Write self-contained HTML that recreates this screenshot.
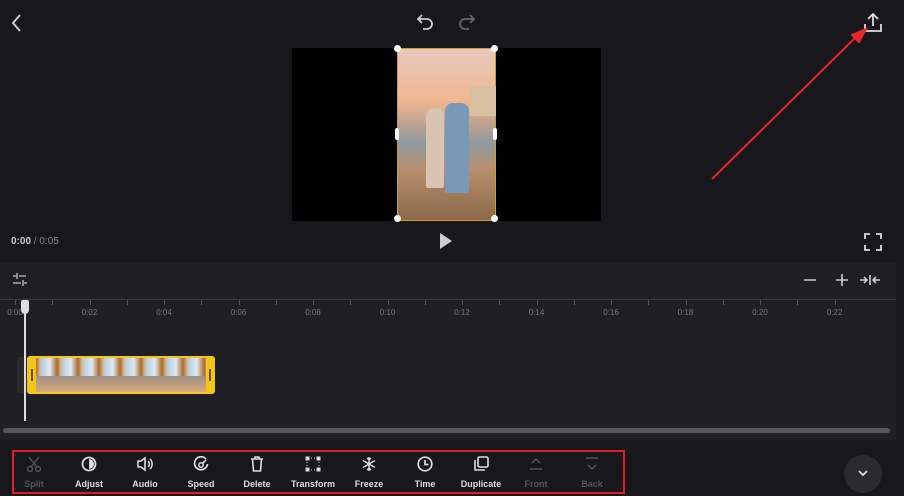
<!DOCTYPE html>
<html><head><style>
*{margin:0;padding:0;box-sizing:border-box}
body{width:904px;height:496px;background:#17171c;position:relative;overflow:hidden;font-family:"Liberation Sans",sans-serif;color:#ddd}
.abs{position:absolute}
.panel{left:0;top:262px;width:896px;height:178px;background:#202024}
.tick{position:absolute;top:300px;width:1px;height:5px;background:#555}
.lbl{position:absolute;top:308px;font-size:8px;color:#777;width:30px;text-align:center}
.tool{position:absolute;top:456px;width:56px;text-align:center;font-size:9px;font-weight:bold;color:#ddd}
.tool svg{display:block;margin:0 auto 7px}
.dis{color:#555}
</style></head><body>
<svg class="abs" style="left:8px;top:12px" width="16" height="22"><path d="M12 3 L5 11 L12 19" stroke="#ccc" stroke-width="2" fill="none"/></svg>
<svg class="abs" style="left:414px;top:12px" width="22" height="20"><path d="M8 3 L4 7 L8 11 M4 7 H13 a5 5 0 0 1 0 10 H9" stroke="#ccc" stroke-width="1.8" fill="none"/></svg>
<svg class="abs" style="left:456px;top:12px" width="22" height="20"><path d="M14 3 L18 7 L14 11 M18 7 H9 a5 5 0 0 0 0 10 H13" stroke="#666" stroke-width="1.8" fill="none"/></svg>
<svg class="abs" style="left:862px;top:12px" width="22" height="22"><path d="M11 2 V14 M6 7 L11 2 L16 7 M3 12 V19 H19 V12" stroke="#ddd" stroke-width="1.8" fill="none"/></svg>
<div class="abs" style="left:292px;top:48px;width:309px;height:173px;background:#000"></div>
<div class="abs" style="left:397px;top:48px;width:99px;height:173px;border:1px solid #c9a030;background:linear-gradient(180deg,#e8c8c0 0%,#f0b890 30%,#b8a090 45%,#8f9aa0 55%,#b89070 70%,#8a6848 100%)"></div>
<div class="abs" style="left:426px;top:108px;width:18px;height:80px;background:#d8c4b0;border-radius:8px 8px 2px 2px"></div>
<div class="abs" style="left:445px;top:103px;width:24px;height:90px;background:#7a98b8;border-radius:8px 8px 2px 2px"></div>
<div class="abs" style="left:470px;top:86px;width:26px;height:30px;background:#d8c0a0"></div>
<div class="abs" style="left:394px;top:45px;width:7px;height:7px;border-radius:50%;background:#fff"></div>
<div class="abs" style="left:491px;top:45px;width:7px;height:7px;border-radius:50%;background:#fff"></div>
<div class="abs" style="left:394px;top:215px;width:7px;height:7px;border-radius:50%;background:#fff"></div>
<div class="abs" style="left:491px;top:215px;width:7px;height:7px;border-radius:50%;background:#fff"></div>
<div class="abs" style="left:395px;top:128px;width:4px;height:12px;border-radius:2px;background:#fff"></div>
<div class="abs" style="left:493px;top:128px;width:4px;height:12px;border-radius:2px;background:#fff"></div>
<div class="abs" style="left:11px;top:236px;font-size:10px;font-weight:bold;color:#ccc">0:00 <span style="color:#888;font-weight:normal">/ 0:05</span></div>
<svg class="abs" style="left:438px;top:232px" width="16" height="18"><path d="M2 1 L14 9 L2 17Z" fill="#ccc"/></svg>
<svg class="abs" style="left:864px;top:233px" width="18" height="18"><path d="M1 6 V1 H6 M12 1 H17 V6 M17 12 V17 H12 M6 17 H1 V12" stroke="#ddd" stroke-width="1.8" fill="none"/></svg>
<div class="abs panel"></div>
<svg class="abs" style="left:12px;top:273px" width="16" height="14"><path d="M1 3H4 M7 3H14 M5 0V6 M1 10H9 M12 10H15 M11 7V13" stroke="#aaa" stroke-width="1.6"/></svg>
<svg class="abs" style="left:802px;top:272px" width="80" height="16"><path d="M2 8H14 M34 8H46 M40 2V14 M58 8H64 M62 5L65 8L62 11 M78 8H72 M74 5L71 8L74 11 M68 3V13" stroke="#ccc" stroke-width="1.6" fill="none"/></svg>
<div class="abs" style="left:0;top:299px;width:896px;height:1px;background:#3a3a3e"></div>
<div id="ticks"></div>
<script>
var h='';for(var i=0;i<=22;i++){var x=15+i*37.25;h+='<div class="tick" style="left:'+x+'px"></div>';if(i%2==0)h+='<div class="lbl" style="left:'+(x-15)+'px">0:'+(i<10?'0':'')+i+'</div>';}
document.getElementById('ticks').innerHTML=h;
</script>
<div class="abs" style="left:17px;top:357px;width:12px;height:36px;background:#2a2a2e;border-radius:3px"></div>
<div class="abs" style="left:27px;top:356px;width:188px;height:38px;background:#f5c518;border-radius:3px"></div>
<div class="abs" style="left:36px;top:358px;width:170px;height:34px;background:repeating-linear-gradient(90deg,#a86c30 0,#d8b890 4px,#b8d0e0 6px,#e0e8f0 14px,#a86c30 21px);"></div>
<div class="abs" style="left:36px;top:376px;width:170px;height:16px;background:linear-gradient(180deg,#a09088,#d8a878)"></div>
<div class="abs" style="left:31px;top:369px;width:2px;height:12px;background:#6a5000"></div>
<div class="abs" style="left:209px;top:369px;width:2px;height:12px;background:#6a5000"></div>
<div class="abs" style="left:24px;top:303px;width:2px;height:118px;background:#ddd"></div>
<div class="abs" style="left:21px;top:300px;width:8px;height:14px;background:#ddd;border-radius:2px 2px 4px 4px"></div>
<div class="abs" style="left:3px;top:428px;width:887px;height:5px;background:#58585c;border-radius:3px"></div>
<svg class="abs" style="left:0;top:0" width="904" height="496"><path d="M712 179 L858 35" stroke="#e8262a" stroke-width="2"/><path d="M866 29 L852 35 L859 42Z" fill="#e8262a" stroke="#e8262a" stroke-width="2"/>
<rect x="13" y="451" width="611" height="42" fill="none" stroke="#e01c24" stroke-width="2"/></svg>
<div class="tool dis" style="left:6px"><svg width="16" height="16"><circle cx="4" cy="13" r="2.5" stroke="#555" fill="none" stroke-width="1.4"/><circle cx="12" cy="13" r="2.5" stroke="#555" fill="none" stroke-width="1.4"/><path d="M3 1L11 11 M13 1L5 11" stroke="#555" stroke-width="1.4"/></svg>Split</div>
<div class="tool" style="left:61px"><svg width="16" height="16"><circle cx="8" cy="8" r="6.5" stroke="#ddd" stroke-width="1.8" fill="none"/><path d="M8 3 a5 5 0 0 1 0 10Z" fill="#ddd"/></svg>Adjust</div>
<div class="tool" style="left:117px"><svg width="18" height="16"><path d="M2 5H5L9 2V14L5 11H2Z" stroke="#ddd" stroke-width="1.6" fill="none"/><path d="M12 5a4 4 0 0 1 0 6 M14 3a7 7 0 0 1 0 10" stroke="#ddd" stroke-width="1.5" fill="none"/></svg>Audio</div>
<div class="tool" style="left:173px"><svg width="16" height="16"><path d="M13 3 A6.5 6.5 0 1 0 14.5 8" stroke="#ddd" stroke-width="1.7" fill="none"/><circle cx="8" cy="9" r="2.2" stroke="#ddd" stroke-width="1.5" fill="none"/><path d="M9.5 7.5L13 4" stroke="#ddd" stroke-width="1.6"/></svg>Speed</div>
<div class="tool" style="left:229px"><svg width="16" height="16"><path d="M2 3H14 M6 3V1H10V3 M3.5 3L4.5 15H11.5L12.5 3" stroke="#ddd" stroke-width="1.6" fill="none"/></svg>Delete</div>
<div class="tool" style="left:285px"><svg width="16" height="16"><path d="M1 1h3v3h-3z M12 1h3v3h-3z M1 12h3v3h-3z M12 12h3v3h-3z M6 2h1 M9 2h1 M6 14h1 M9 14h1 M2 6v1 M2 9v1 M14 6v1 M14 9v1" fill="#ddd" stroke="#ddd" stroke-width="1"/></svg>Transform</div>
<div class="tool" style="left:341px"><svg width="16" height="16"><path d="M8 1V15 M2 4.5L14 11.5 M2 11.5L14 4.5 M6 2L8 4L10 2 M6 14L8 12L10 14" stroke="#ddd" stroke-width="1.4" fill="none"/></svg>Freeze</div>
<div class="tool" style="left:397px"><svg width="16" height="16"><circle cx="8" cy="8" r="6.8" stroke="#ddd" stroke-width="1.7" fill="none"/><path d="M8 4V8.5H11.5" stroke="#ddd" stroke-width="1.7" fill="none"/></svg>Time</div>
<div class="tool" style="left:453px"><svg width="16" height="16"><rect x="5" y="1" width="10" height="10" rx="1.5" stroke="#ddd" stroke-width="1.6" fill="none"/><path d="M2 4V14H12" stroke="#ddd" stroke-width="1.6" fill="none"/></svg>Duplicate</div>
<div class="tool dis" style="left:508px"><svg width="16" height="16"><path d="M4 7L8 3L12 7 M2 13H14" stroke="#555" stroke-width="1.5" fill="none"/></svg>Front</div>
<div class="tool dis" style="left:564px"><svg width="16" height="16"><path d="M2 2H14 M4 9L8 13L12 9" stroke="#555" stroke-width="1.5" fill="none"/></svg>Back</div>
<div class="abs" style="left:844px;top:455px;width:38px;height:38px;border-radius:50%;background:#2a2a2f"></div>
<svg class="abs" style="left:857px;top:468px" width="12" height="10"><path d="M2 3L6 7L10 3" stroke="#ddd" stroke-width="1.7" fill="none"/></svg>
</body></html>
